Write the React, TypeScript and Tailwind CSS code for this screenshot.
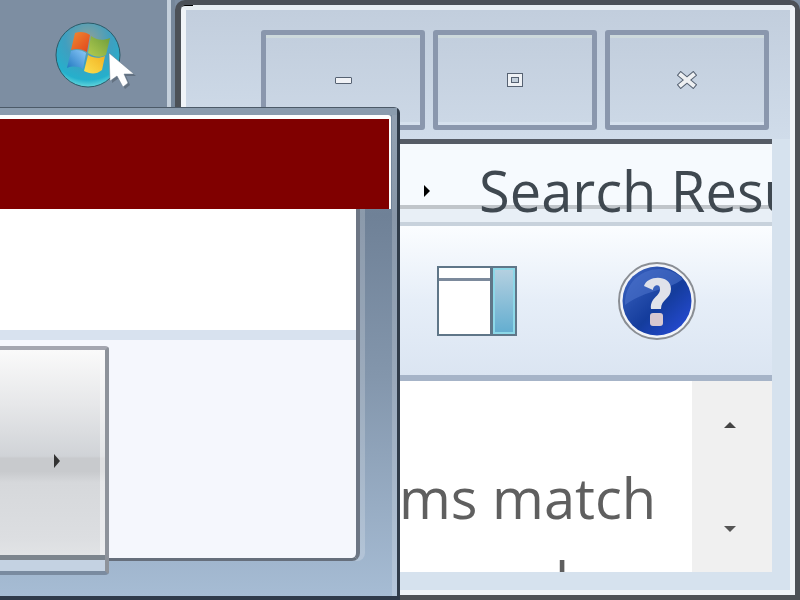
import React from "react";

const font = { fontFamily: '"Open Sans", "Noto Sans", "Liberation Sans", sans-serif' };

function Orb() {
  return (
    <svg width="70" height="70" viewBox="0 0 70 70" className="absolute left-[53px] top-[20px] blur-[0.6px]">
      <defs>
        <radialGradient id="orb" cx="50%" cy="25%" r="80%">
          <stop offset="0" stopColor="#8f9f98" />
          <stop offset="0.45" stopColor="#3f9fc0" />
          <stop offset="0.8" stopColor="#25b0cc" />
          <stop offset="1" stopColor="#7fe8e4" />
        </radialGradient>
        <linearGradient id="pr" x1="0" y1="0" x2="1" y2="1">
          <stop offset="0" stopColor="#f08a30" />
          <stop offset="1" stopColor="#e0441c" />
        </linearGradient>
        <linearGradient id="pg" x1="1" y1="0" x2="0" y2="1">
          <stop offset="0" stopColor="#6c9c3a" />
          <stop offset="1" stopColor="#b4cc50" />
        </linearGradient>
        <linearGradient id="pb" x1="1" y1="0" x2="0" y2="1">
          <stop offset="0" stopColor="#8cc8f8" />
          <stop offset="1" stopColor="#1f78c0" />
        </linearGradient>
        <linearGradient id="py" x1="1" y1="0" x2="0" y2="1">
          <stop offset="0" stopColor="#f2b020" />
          <stop offset="1" stopColor="#fbe050" />
        </linearGradient>
      </defs>
      <circle cx="35" cy="35" r="32" fill="url(#orb)" stroke="#2b5a68" strokeWidth="1" />
      <path d="M22 13 C27 11 33 12 37 15 L34 32 C29 29 24 28 18 30 Z" fill="url(#pr)" />
      <path d="M38 16 C43 20 50 21 57 18 L53 35 C47 38 41 37 35 33 Z" fill="url(#pg)" />
      <path d="M18 31 C23 29 29 30 33 33 L30 49 C25 46 19 46 14 48 Z" fill="url(#pb)" />
      <path d="M35 35 C40 38 46 39 52 36 L49 50 C43 55 37 54 31 51 Z" fill="url(#py)" />
    </svg>
  );
}

function Cursor() {
  return (
    <svg width="34" height="40" viewBox="0 0 34 40" className="absolute left-[106px] top-[50px] blur-[0.4px]">
      <path d="M3 3 L4 31 L11 26 L17 37 L22 33 L18 24 L28 24 Z" fill="#3c4650" opacity="0.4" transform="translate(2 2)" />
      <path d="M3 3 L4 31 L11 26 L17 37 L22 33 L18 24 L28 24 Z" fill="#ffffff" stroke="#66788a" strokeWidth="0.5" />
    </svg>
  );
}

function CaptionButton({ glyph }: { glyph: React.ReactNode }) {
  return (
    <div className="w-[164px] h-[100px] flex items-center justify-center border-[5px] border-[#8a97ad] rounded-[3px] bg-gradient-to-b from-[#c2cedd] to-[#ccd8e6] shadow-[inset_0_3px_0_#cdd9dc,inset_0_-3px_0_#d6e1ee]">
      {glyph}
    </div>
  );
}

function PanelIcon() {
  return (
    <svg width="80" height="70" viewBox="0 0 80 70">
      <defs>
        <linearGradient id="pane" x1="0" y1="0" x2="0" y2="1">
          <stop offset="0" stopColor="#b4d0e0" />
          <stop offset="1" stopColor="#64aed0" />
        </linearGradient>
      </defs>
      <rect x="1" y="1" width="78" height="68" fill="#ffffff" stroke="#5f7688" strokeWidth="2" />
      <rect x="2" y="12" width="52" height="3" fill="#7c8a9c" />
      <rect x="53" y="1" width="3" height="68" fill="#5f7688" />
      <rect x="56" y="2" width="22" height="66" fill="#8cd8e8" />
      <rect x="58" y="4" width="18" height="62" fill="url(#pane)" />
    </svg>
  );
}

function HelpIcon() {
  return (
    <svg width="80" height="80" viewBox="0 0 80 80" className="blur-[0.4px]">
      <defs>
        <linearGradient id="help" x1="0" y1="0" x2="1" y2="1">
          <stop offset="0" stopColor="#3f67c4" />
          <stop offset="0.55" stopColor="#143c9c" />
          <stop offset="1" stopColor="#2a4ee0" />
        </linearGradient>
      </defs>
      <circle cx="40" cy="40" r="38" fill="#f2f4f8" stroke="#8a8e94" strokeWidth="2" />
      <circle cx="40" cy="40" r="34.5" fill="url(#help)" />
      <path d="M8 44 A34 34 0 0 1 66 18 C50 30 30 28 8 44 Z" fill="#4f74cc" opacity="0.55" />
      <path d="M27 25 C30 14 54 13 54 28 C54 38 44 38 44 48 L34 48 C33 36 43 36 43 28 C43 22 36 24 36 29 Z" fill="#e0e2ea" />
      <rect x="33" y="52" width="13" height="13" rx="3" fill="#d8c8d0" />
    </svg>
  );
}

export default function App() {
  return (
    <div className="relative w-[800px] h-[600px] overflow-hidden bg-[#7d8ea2]" style={font}>
      <Orb />
      <Cursor />

      {/* Back window */}
      <div className="absolute z-0 left-[167px] top-0 right-0 bottom-0 flex border-l-4 border-l-[#c4d0dc]">
        <div className="w-[4px] bg-[#76879a]" />
        <div className="relative flex-1 flex flex-col border-[5px] border-[#4c5157] border-l-[6px] rounded-tl-[10px] rounded-tr-[10px] overflow-hidden">
          <div className="flex-1 flex flex-col border-t-[5px] border-t-[#e8eef2] border-l-[5px] border-l-[#f0f4f8] border-r-[5px] border-r-[#eef3f8] border-b-[5px] border-b-[#eef3f8] bg-[#d6e2ee] min-h-0">
            {/* title bar */}
            <div className="h-[129px] shrink-0 flex justify-end gap-[8px] pt-[20px] pr-[21px] pl-[68px] bg-gradient-to-b from-[#c2cedd] to-[#d0dcea]">
              <CaptionButton glyph={<div className="w-[17px] h-[7px] bg-[#f0f2f6] border border-[#566272] rounded-[1px]" />} />
              <CaptionButton glyph={<div className="w-[16px] h-[14px] bg-[#eef1f5] border border-[#566272] flex items-center justify-center"><div className="w-[8px] h-[6px] bg-[#c4d0dc] border border-[#566272]" /></div>} />
              <CaptionButton
                glyph={
                  <svg width="20" height="18" viewBox="0 0 20 18">
                    <path d="M4 4 L16 14 M16 4 L4 14" stroke="#566272" strokeWidth="6" strokeLinecap="square" />
                    <path d="M4 4 L16 14 M16 4 L4 14" stroke="#eef0f2" strokeWidth="4" strokeLinecap="square" />
                  </svg>
                }
              />
            </div>
            {/* main */}
            <div className="flex-1 flex flex-col min-h-0 mr-[18px] overflow-hidden">
              <div className="h-[5px] bg-[#565c66] shrink-0" />
              <div className="relative z-10 h-[65px] shrink-0 bg-[#f6fafe] flex items-start pl-[293px] pt-[8px] border-b-4 border-b-[#c0c5ca]">
                <span className="absolute left-[238px] top-[41px] w-0 h-0 border-y-[6px] border-y-transparent border-l-[6px] border-l-black" />
                <span className="text-[56px] leading-[76px] text-[#3f4850] whitespace-nowrap">Search Results</span>
              </div>
              <div className="h-[13px] shrink-0 bg-[#e8eff6]" />
              <div className="h-[4px] shrink-0 bg-[#c8d2dc]" />
              <div className="h-[149px] shrink-0 flex items-center pl-[251px] gap-[100px] bg-gradient-to-b from-[#fbfdff] via-[#e6eef8] to-[#dbe5f2]">
                <PanelIcon />
                <HelpIcon />
              </div>
              <div className="h-[6px] shrink-0 bg-[#a6b4c8]" />
              <div className="h-[191px] shrink-0 flex overflow-hidden bg-white">
                <div className="flex-1 min-w-0 overflow-hidden pl-[213px] pt-[78px]">
                  <div className="text-[56px] leading-[76px] text-[#5f5f5f] whitespace-nowrap">ms match</div>
                  <div className="text-[56px] leading-[76px] mt-[8px] text-[#5f5f5f] whitespace-nowrap pl-[156px]">l</div>
                </div>
                <div className="w-[80px] shrink-0 flex flex-col items-center justify-between pt-[41px] pb-[40px] pr-[4px] bg-[#f0f0f0]">
                  <div className="w-0 h-0 border-x-[6px] border-x-transparent border-b-[6px] border-b-[#444]" />
                  <div className="w-0 h-0 border-x-[6px] border-x-transparent border-t-[6px] border-t-[#555]" />
                </div>
              </div>
            </div>
          </div>
          <div className="absolute z-20 left-[-6px] top-[-5px] w-[18px] h-[18px] border-l-[6px] border-t-[6px] border-black rounded-tl-[10px]" />
          <div className="absolute z-20 right-[-5px] top-[-5px] w-[18px] h-[14px] border-r-[5px] border-t-[5px] border-black rounded-tr-[8px]" />
        </div>
      </div>

      {/* Front window */}
      <div className="absolute z-10 left-[-20px] top-[107px] w-[420px] h-[493px] flex flex-col bg-[linear-gradient(to_bottom,#7c8ea2,#6f8197_22%,#8396ac_55%,#a6bcd4)] border-t border-t-[#4c5a68] border-r-[3px] border-r-[#303c4a] border-b-4 border-b-[#2f3a4a] rounded-tr-[6px] shadow-[inset_-5px_0_0_rgba(255,255,255,0.18)]">
        <div className="h-[7px] shrink-0 bg-[#8b9cae]" />
        <div className="mr-[6px] shrink-0 bg-white pt-[4px] pr-[2px] rounded-tr-[3px]">
          <div className="h-[90px] bg-[#800000]" />
        </div>
        <div className="relative flex-1 mr-[37px] mb-[35px] flex flex-col bg-[#f5f7fd] border-r-4 border-r-[#6d7684] border-b-[3px] border-b-[#666f7c] rounded-br-[8px] shadow-[5px_0_0_rgba(255,255,255,0.2)]">
          <div className="h-[121px] bg-white" />
          <div className="h-[10px] bg-[#d8e2ef]" />
          <div className="absolute left-0 top-[137px] w-[129px] h-[229px] flex items-center justify-center border-t-4 border-t-[#a4a6b0] border-r-4 border-r-[#8e939b] border-b-4 border-b-[#7a8ba0] rounded-tr-[4px] rounded-br-[4px] bg-[linear-gradient(to_bottom,#fafafa,#e6e7e9_25%,#d0d3d7_48%,#c8cacd_49%,#c8cacd_55%,#d6d8db_60%,#dcdee1_85%,#e6e8ea)] shadow-[inset_-5px_0_0_rgba(255,255,255,0.4)]">
            <span className="ml-[28px] w-0 h-0 border-y-[7px] border-y-transparent border-l-[6px] border-l-[#333]" />
            <div className="absolute left-0 right-0 bottom-0 h-[16px] flex flex-col">
              <div className="h-[5px] bg-[#7c858e]" />
              <div className="flex-1 bg-[#c4d2e2]" />
            </div>
          </div>
        </div>
      </div>
    </div>
  );
}
